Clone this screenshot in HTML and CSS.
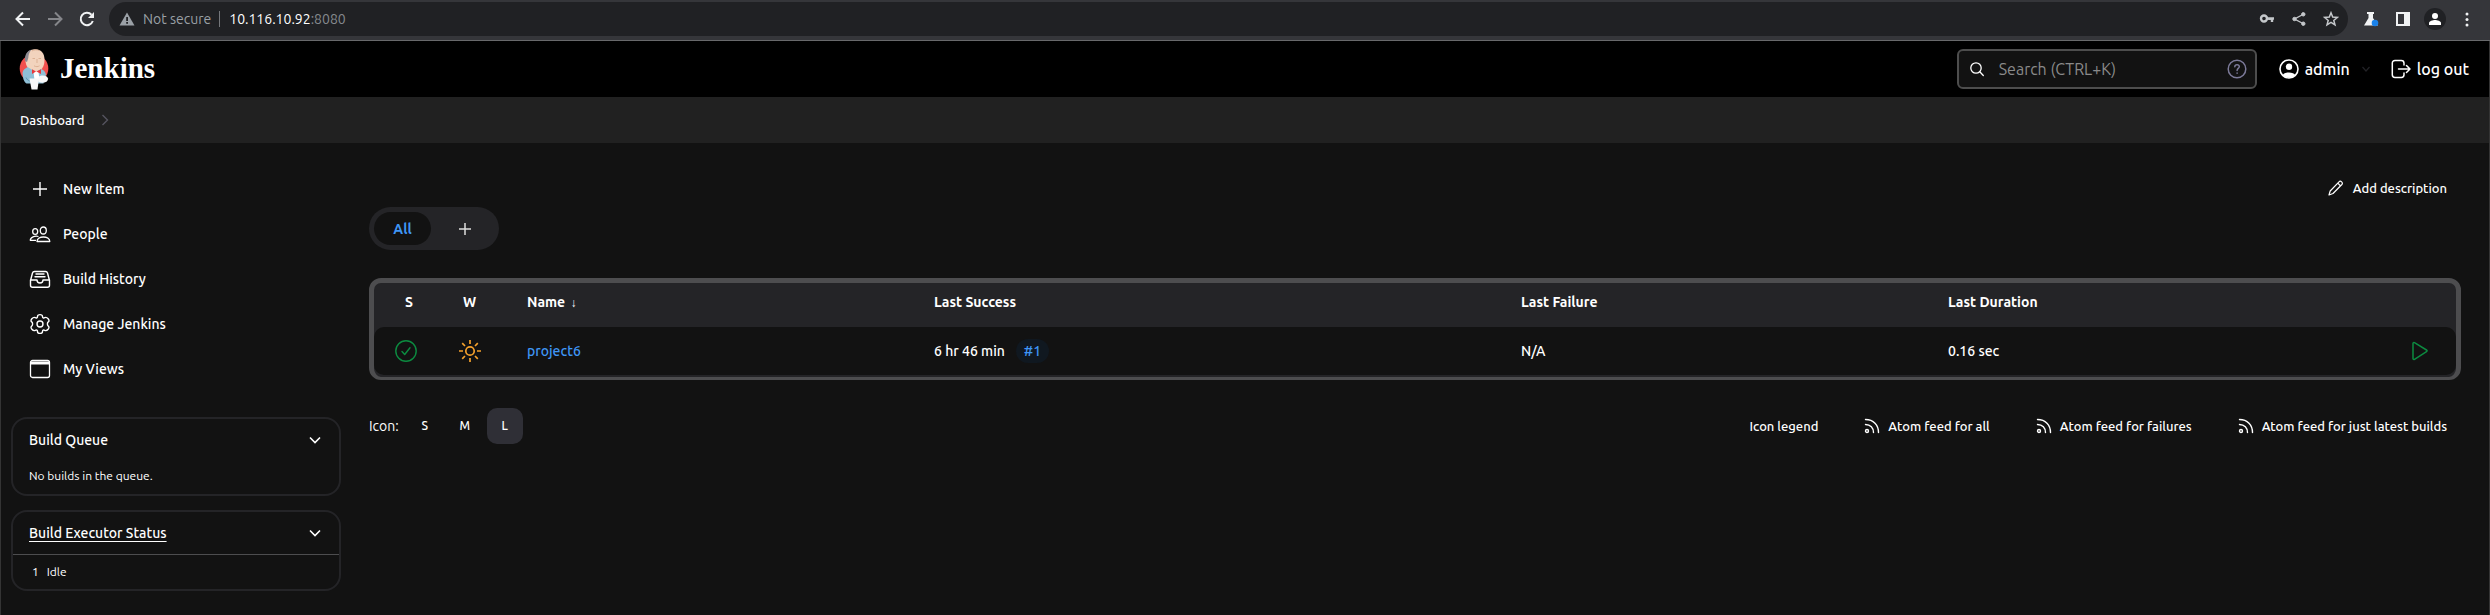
FILE: index.html
```html
<!DOCTYPE html>
<html lang="en">
<head>
<meta charset="utf-8">
<title>Dashboard [Jenkins]</title>
<link rel="stylesheet" href="styles.css">
</head>
<body>
<div class="browser">
  <nav class="browser-nav">
    <button class="tool" aria-label="Back"><svg width="16" height="16" viewBox="0 0 16 16" fill="none" stroke="#f1f3f4" stroke-width="2"><path d="M15 8H2M8 1.500L1.500 8L8 14.500"/></svg></button>
    <button class="tool" aria-label="Forward"><svg width="16" height="16" viewBox="0 0 16 16" fill="none" stroke="#85868a" stroke-width="2"><path d="M1 8h13M8 1.500L14.500 8L8 14.500"/></svg></button>
    <button class="tool" aria-label="Reload"><svg width="16" height="16" viewBox="0 0 16 16" fill="none" stroke="#f1f3f4" stroke-width="2"><path d="M13.800 10A6.200 6.200 0 1 1 12.500 3.700"/><path d="M15 1v6H9z" fill="#f1f3f4" stroke="none"/></svg></button>
  </nav>
  <div class="omnibox">
    <svg class="warn" width="16" height="16" viewBox="0 0 16 16"><path d="M8 1.500L15.500 14.500H.5z" fill="#9aa0a6"/><path d="M7.200 6h1.800v4H7.200zM7.200 11h1.800v1.800H7.200z" fill="#202124"/></svg>
    <span class="insecure">Not secure</span>
    <span class="address">10.116.10.92<span class="port">:8080</span></span>
    <span class="omni-actions">
      <svg width="16" height="16" viewBox="0 0 16 16" fill="none" stroke="#c4c7ca" stroke-width="2.400"><circle cx="5" cy="7.500" r="3"/><path d="M8 7.500H15M13 7.500V11M10.500 7.500v1.500"/></svg>
      <svg width="16" height="16" viewBox="0 0 16 16" fill="#c4c7ca" stroke="#c4c7ca"><path d="M12 3.500L3.500 8l8.500 4.500" fill="none" stroke-width="1.400"/><circle cx="12.300" cy="3.300" r="1.700"/><circle cx="3.500" cy="8" r="1.700"/><circle cx="12.300" cy="12.700" r="1.700"/></svg>
      <svg width="16" height="16" viewBox="0 0 16 16" fill="none" stroke="#c4c7ca" stroke-width="1.500"><path d="M8 1.800l1.700 4.300 4.700.3-3.600 3 1.200 4.500L8 11.400l-4 2.500 1.200-4.500-3.600-3 4.700-.3z"/></svg>
    </span>
  </div>
  <div class="browser-actions">
    <svg width="16" height="16" viewBox="0 0 16 16"><path d="M4 1h7v2h-1v4l5 7.500H1L5.500 7V3H4z" fill="#f1f3f4"/><circle cx="12" cy="12" r="3.300" fill="#1a82ea"/></svg>
    <svg width="16" height="16" viewBox="0 0 16 16"><path d="M1 1h14v14H1zM3 3v10h6V3z" fill="#f1f3f4" fill-rule="evenodd"/></svg>
    <svg class="avatar" width="22" height="22" viewBox="0 0 22 22"><circle cx="11" cy="11" r="11" fill="#202124"/><circle cx="11" cy="8" r="3" fill="#fff"/><path d="M5 17v-2c0-2 4-3 6-3s6 1 6 3v2z" fill="#fff"/></svg>
    <svg width="16" height="16" viewBox="0 0 16 16" fill="#f1f3f4"><circle cx="8" cy="3" r="1.500"/><circle cx="8" cy="8.500" r="1.500"/><circle cx="8" cy="14" r="1.500"/></svg>
  </div>
</div>
<div class="page">
  <header class="header">
    <a class="brand" href="#">
      <svg width="30" height="42" viewBox="0 0 30 42"><circle cx="15" cy="20.500" r="14.300" fill="#f2504e"/><path d="M6.500 12C6.500 5 10 1.200 16 1.200s9.500 4 9.500 10.500c0 7-3 11.500-9 11.500S6.500 19 6.500 12z" fill="#f2d3bd"/><path d="M6 13C5.500 7 8 3 12.500 1.500 10 4.500 9.500 7 9.300 10L8 14z" fill="#8d8a92"/><path d="M13 3c2-1.500 5-1.500 7-.5M13.500 10.500h2.500M19.500 10.500H22M18 11v4M15 17.800c2 1.200 4 1 5.500 0" fill="none" stroke="#d9ad90" stroke-width=".9"/><path d="M8.500 19c-1.500 1.500-4.500 2-5 6 .5 5 1 8.500 4 10.500h17l2.500-9c-.5-3-3-5-5-5.500l-5 3z" fill="#8fbfd6"/><path d="M14.500 23l5 .5 1 9h-5z" fill="#fff"/><path d="M13 21.300l4 2.300-4 2.400zM22 21.300l-4.500 2.300 4.500 2.400z" fill="#e8383b"/><path d="M10.500 30.500H20l-1.500 11h-6z" fill="#f7f7f8"/><path d="M19.500 29c3-2.500 9-1.500 9.500 1.500.3 4-5 5-9.500 3.500z" fill="#f7f7f8"/><path d="M7 29.500c1 2 2 3 3.500 3.500" fill="none" stroke="#5c93ad"/></svg>
      <span>Jenkins</span>
    </a>
    <div class="search">
      <svg width="16" height="16" viewBox="0 0 16 16" fill="none" stroke="#fff" stroke-width="1.300" stroke-linecap="round"><circle cx="7" cy="7" r="5.200"/><path d="M10.800 10.800L14.300 14.500"/></svg>
      <input type="text" aria-label="Search" placeholder="Search (CTRL+K)">
      <a class="help" href="#" aria-label="Help"><svg width="20" height="20" viewBox="0 0 20 20" fill="none" stroke="#7c7a99" stroke-width="1.500" stroke-linecap="round"><circle cx="10" cy="10" r="8.800"/><path d="M7.800 7.800c.2-3 4.700-2.600 4.500 0-.1 1.600-2.200 1.700-2.200 3.600M10.100 14v.2"/></svg></a>
    </div>
    <a class="user" href="#"><svg width="20" height="20" viewBox="0 0 20 20"><circle cx="10" cy="10" r="9" fill="none" stroke="#fff" stroke-width="1.600"/><circle cx="10" cy="7.800" r="3.200" fill="#fff"/><path d="M3.800 16C5 12.600 15 12.600 16.200 16 13 19.700 7 19.700 3.800 16z" fill="#fff"/></svg>admin</a>
    <svg class="user-more" width="8" height="8" viewBox="0 0 8 8" fill="none" stroke="#222226" stroke-width="1.200"><path d="M.5 2L4 6l3.500-4"/></svg>
    <a class="user" href="#"><svg width="20" height="20" viewBox="0 0 20 20" fill="none" stroke="#fff" stroke-width="1.500" stroke-linecap="round" stroke-linejoin="round"><path d="M13 6V4.200C13 2.500 12 1.500 10.300 1.500H4C2.300 1.500 1.300 2.500 1.300 4.200v11.600c0 1.700 1 2.700 2.700 2.700h6.300c1.700 0 2.700-1 2.700-2.700V14M7.500 10H19M15.500 6.500L19 10l-3.500 3.500"/></svg>log out</a>
  </header>
  <nav class="crumbs"><a href="#">Dashboard</a><svg width="8" height="12" viewBox="0 0 8 12" fill="none" stroke="#55545f" stroke-width="1.400"><path d="M1.500 1L6.500 6l-5 5"/></svg></nav>
  <div class="body">
    <aside class="side">
      <nav class="tasks">
        <a href="#"><svg width="22" height="22" viewBox="0 0 22 22" fill="none" stroke="#fff" stroke-width="1.400"><path d="M11 4v14M4 11h14"/></svg>New Item</a>
        <a href="#"><svg width="22" height="22" viewBox="0 0 22 22" fill="none" stroke="#fff" stroke-width="1.300" stroke-linejoin="round"><ellipse cx="14.300" cy="7.500" rx="3" ry="3.500"/><path d="M8 18.500c0-6 12.800-6 12.800 0zM9.500 13.500C6 12.500 1.300 14 1.300 17.300H7"/><ellipse cx="6.200" cy="8.500" rx="2.500" ry="2.900"/></svg>People</a>
        <a href="#"><svg width="22" height="22" viewBox="0 0 22 22" fill="none" stroke="#fff" stroke-width="1.400" stroke-linejoin="round" stroke-linecap="round"><path d="M1.500 12.500l2-7.500c.3-1 1-1.500 2-1.500h11c1 0 1.700.5 2 1.500l2 7.500M1.500 12v5.300c0 1.200.8 2 2 2h15c1.200 0 2-.8 2-2V12H14c0 4-6 4-6 0H1.500M7 6h8M6 8.700h10"/></svg>Build History</a>
        <a href="#"><svg width="22" height="22" viewBox="0 0 22 22" fill="none" stroke="#fff" stroke-width="1.400" stroke-linejoin="round"><circle cx="11" cy="11" r="3"/><path d="M8.500 3.500C8.500 1 13.500 1 13.500 3.500c0 1.400 1 1.900 2.200 1.200 2.200-1.300 5.800 2.800 3.600 4.200-1.200.8-1.200 3.400 0 4.200 2.200 1.400-1.400 5.500-3.600 4.200-1.200-.7-2.200-.2-2.200 1.200 0 2.500-5 2.500-5 0 0-1.400-1-1.900-2.200-1.200-2.200 1.300-5.800-2.800-3.600-4.200 1.200-.8 1.200-3.400 0-4.200C.5 7.500 4.100 3.400 6.300 4.700 7.500 5.400 8.500 4.900 8.500 3.500z"/></svg>Manage Jenkins</a>
        <a href="#"><svg width="22" height="22" viewBox="0 0 22 22" fill="none" stroke="#fff" stroke-width="1.300"><rect x="1.500" y="2.500" width="19" height="17" rx="2"/><path d="M1.500 3.500h19v3h-19z" fill="#fff" stroke="none"/></svg>My Views</a>
      </nav>
      <section class="pane">
        <div class="pane-head"><h2>Build Queue</h2><button class="fold" aria-label="Collapse Build Queue"><svg width="12" height="8" viewBox="0 0 12 8" fill="none" stroke="#fff" stroke-width="1.600"><path d="M1 1.500l5 5 5-5"/></svg></button></div>
        <p class="pane-text">No builds in the queue.</p>
      </section>
      <section class="pane">
        <div class="pane-head"><h2><a href="#">Build Executor Status</a></h2><button class="fold" aria-label="Collapse Build Executor Status"><svg width="12" height="8" viewBox="0 0 12 8" fill="none" stroke="#fff" stroke-width="1.600"><path d="M1 1.500l5 5 5-5"/></svg></button></div>
        <p class="executor"><span>1</span><span>Idle</span></p>
      </section>
    </aside>
    <main class="main">
      <a class="describe" href="#"><svg width="16" height="16" viewBox="0 0 16 16" fill="none" stroke="#fff" stroke-width="1.200" stroke-linejoin="round"><path d="M1 15l1.200-4L11 1.800c1.600-1.600 4.400.9 2.900 2.700L5 13.500zM9.800 3.200l2.800 2.800"/></svg>Add description</a>
      <div class="tabs"><a class="tab tab-on" href="#">All</a><a class="tab tab-add" href="#" aria-label="New view"><svg width="12" height="12" viewBox="0 0 12 12" stroke="#ddd" stroke-width="1.500"><path d="M6 0v12M0 6h12"/></svg></a></div>
      <div class="table-frame">
      <table class="jobs">
        <colgroup><col class="c-s"><col class="c-w"><col class="c-name"><col class="c-ok"><col class="c-fail"><col class="c-time"><col></colgroup>
        <thead><tr><th class="s-head">S</th><th>W</th><th>Name <span class="sort">↓</span></th><th>Last Success</th><th>Last Failure</th><th>Last Duration</th><th></th></tr></thead>
        <tbody><tr>
          <td class="s-cell"><svg width="24" height="24" viewBox="0 0 24 24" fill="none" stroke="#0c8b40" stroke-width="1.400" stroke-linecap="round" stroke-linejoin="round"><circle cx="12" cy="12" r="10.200"/><path d="M8 12.500l2.700 3L16 8.700"/></svg></td>
          <td class="w-cell"><svg width="24" height="24" viewBox="0 0 24 24" fill="none" stroke="#f5a12c" stroke-width="1.700"><circle cx="12" cy="12" r="4.200"/><path d="M12 1v4M12 19v4M1 12h4M19 12h4M4.200 4.200L7 7M17 17l2.800 2.800M4.200 19.800L7 17M17 7l2.800-2.800"/></svg></td>
          <td><a class="job" href="#">project6</a></td>
          <td>6 hr 46 min<a class="build" href="#">#1</a></td>
          <td>N/A</td>
          <td>0.16 sec</td>
          <td class="run"><button class="play" aria-label="Schedule a build for project6"><svg width="18" height="20" viewBox="0 0 18 20" fill="none" stroke="#0c8b40" stroke-width="1.500" stroke-linejoin="round"><path d="M2 2.500c0-1 .8-1.200 1.500-.8l12 7.300c.8.500.8 1.200 0 1.700l-12 7.600c-.7.400-1.500.2-1.500-.8z"/></svg></button></td>
        </tr></tbody>
      </table>
      </div>
      <div class="footbar">
        <span class="icon-label">Icon:</span>
        <div class="sizes"><button>S</button><button>M</button><button class="on">L</button></div>
        <div class="links">
          <a href="#">Icon legend</a>
          <a href="#"><svg width="16" height="16" viewBox="0 0 16 16" fill="none" stroke="#fff" stroke-width="1.400" stroke-linecap="round"><circle cx="3" cy="13" r="1.500"/><path d="M1.500 6.500c5 0 8 3.500 8 8M1.500 1.500c8 0 13 5.500 13 13"/></svg>Atom feed for all</a>
          <a href="#"><svg width="16" height="16" viewBox="0 0 16 16" fill="none" stroke="#fff" stroke-width="1.400" stroke-linecap="round"><circle cx="3" cy="13" r="1.500"/><path d="M1.500 6.500c5 0 8 3.500 8 8M1.500 1.500c8 0 13 5.500 13 13"/></svg>Atom feed for failures</a>
          <a href="#"><svg width="16" height="16" viewBox="0 0 16 16" fill="none" stroke="#fff" stroke-width="1.400" stroke-linecap="round"><circle cx="3" cy="13" r="1.500"/><path d="M1.500 6.500c5 0 8 3.500 8 8M1.500 1.500c8 0 13 5.500 13 13"/></svg>Atom feed for just latest builds</a>
        </div>
      </div>
    </main>
  </div>
</div>
</body>
</html>
```
FILE: styles.css
```css
* { box-sizing: border-box; }
body {
  margin: 0;
  min-height: 100vh;
  display: flex;
  flex-direction: column;
  background: #121212;
  color: #fff;
  font: 500 14px/20px Ubuntu, "Noto Sans", sans-serif;
}
a { color: inherit; text-decoration: none; }
button { border: 0; padding: 0; background: none; color: inherit; font: inherit; }
svg { flex: none; display: block; }

.browser {
  display: flex;
  align-items: center;
  height: 41px;
  padding: 0 15px 3px;
  background: #35363a;
  border-bottom: 1px solid #68696b;
}
.browser-nav { display: flex; gap: 16px; margin-right: 14px; }
.omnibox {
  flex: 1;
  display: flex;
  align-items: center;
  height: 34px;
  padding: 0 9px 0 10px;
  border-radius: 17px;
  background: #202124;
  font-weight: 400;
}
.insecure {
  margin-left: 8px;
  padding-right: 8px;
  border-right: 1px solid #75777b;
  line-height: 16px;
  color: #9aa0a6;
}
.address { margin-left: 9px; }
.port { color: #85898e; }
.omni-actions { display: flex; gap: 16px; margin-left: auto; }
.browser-actions { display: flex; align-items: center; gap: 16px; margin-left: 15px; }
.avatar { margin: 0 -3px; }

.page {
  flex: 1;
  border: solid #343434;
  border-width: 0 1px;
}
.header {
  display: flex;
  align-items: center;
  height: 56px;
  padding: 0 20px 0 18px;
  background: #000;
  font-size: 16px;
}
.brand {
  display: flex;
  align-items: center;
  gap: 11px;
  margin-right: auto;
  font: 700 29px/32px "Liberation Serif", serif;
}
.brand span { padding-bottom: 3px; }
.search {
  display: flex;
  align-items: center;
  width: 300px;
  height: 40px;
  margin-right: 22px;
  padding: 0 8px 0 10px;
  border: 2px solid #4d4d4d;
  border-radius: 6px;
  background: #121212;
}
.search input {
  flex: 1;
  min-width: 0;
  padding: 0 0 0 14px;
  border: 0;
  outline: 0;
  background: none;
  color: #fff;
  font: 400 16px/20px Ubuntu, "Noto Sans", sans-serif;
}
.search input::placeholder { color: #8a8a8a; }
.user { display: flex; align-items: center; gap: 6px; }
.user-more { margin: 0 21px 0 12px; }

.crumbs {
  display: flex;
  align-items: center;
  gap: 16px;
  height: 46px;
  padding: 0 19px;
  background: #212121;
  font-size: 13px;
}
.body { display: flex; }
.side { width: 330px; margin: 28px 28px 24px 10px; flex: none; }
.tasks { display: flex; flex-direction: column; gap: 9px; margin-bottom: 30px; }
.tasks a { display: flex; align-items: center; gap: 12px; height: 36px; padding: 0 18px; }
.pane { margin-bottom: 14px; border: 2px solid #242427; border-radius: 16px; }
.pane-head { display: flex; align-items: center; justify-content: space-between; height: 42px; padding: 0 18px 0 16px; }
.pane-head h2 { margin: 0; font-size: 14px; font-weight: 500; }
.pane-head a { text-decoration: underline; text-underline-offset: 3px; }
.pane-text, .executor { margin: 0; font-size: 12px; font-weight: 400; line-height: 20px; }
.pane-text { padding: 5px 16px 8px; }
.executor { display: flex; gap: 8px; padding: 7px 19px; border-top: 1px solid #4d4d4f; }

.main { flex: 1; min-width: 0; display: flex; flex-direction: column; padding: 35px 28px 0 0; }
.describe { display: flex; align-items: center; gap: 9px; align-self: flex-end; padding-right: 14px; font-size: 13px; }
.tabs { display: flex; align-self: flex-start; margin: 9px 0 28px; padding: 5px; border-radius: 22px; background: #242427; }
.tab { display: flex; align-items: center; justify-content: center; width: 57px; height: 33px; border-radius: 17px; font-size: 14px; }
.tab-on { background: #121212; color: #3f96f5; font-weight: 700; }
.tab-add { width: 63px; padding-left: 5px; }

.table-frame { padding-bottom: 2px; border: solid #4d4d4f; border-width: 5px 5px 3px; border-radius: 12px; background: #242427; }
.jobs { width: 100%; table-layout: fixed; border-collapse: separate; border-spacing: 0; }
.c-s { width: 64px; }
.c-w { width: 64px; }
.c-name { width: 407px; }
.c-ok { width: 587px; }
.c-fail { width: 427px; }
.c-time { width: 427px; }
.jobs th { height: 44px; padding: 0 0 6px 25px; text-align: left; font-size: 14px; font-weight: 700; }
.jobs td { height: 48px; padding: 0 0 0 25px; background: #121212; }
.jobs td:first-child { border-radius: 10px 0 0 10px; }
.jobs td:last-child { border-radius: 0 10px 10px 0; }
.jobs .s-head { padding-left: 31px; }
.jobs .s-cell { padding-left: 20px; }
.jobs .w-cell { padding-left: 20px; }
.sort { margin-left: 2px; font-size: 12px; font-weight: 400; }
.job, .build { color: #3f96f5; }
.build { display: inline-block; margin-left: 11px; padding: 2px 8px; border-radius: 12px; background: #101820; font-weight: 500; }
.jobs .run { padding-right: 27px; }
.play { display: block; margin-left: auto; }

.footbar { display: flex; align-items: center; margin-top: 28px; }
.icon-label { font-weight: 400; }
.sizes { display: flex; gap: 4px; margin-left: 8px; font-size: 12px; }
.sizes button { width: 36px; height: 36px; border-radius: 10px; }
.sizes .on { background: #2f2f36; }
.links { display: flex; gap: 46px; margin-left: auto; padding-right: 14px; font-size: 13px; }
.links a { display: flex; align-items: center; gap: 8px; }
```
